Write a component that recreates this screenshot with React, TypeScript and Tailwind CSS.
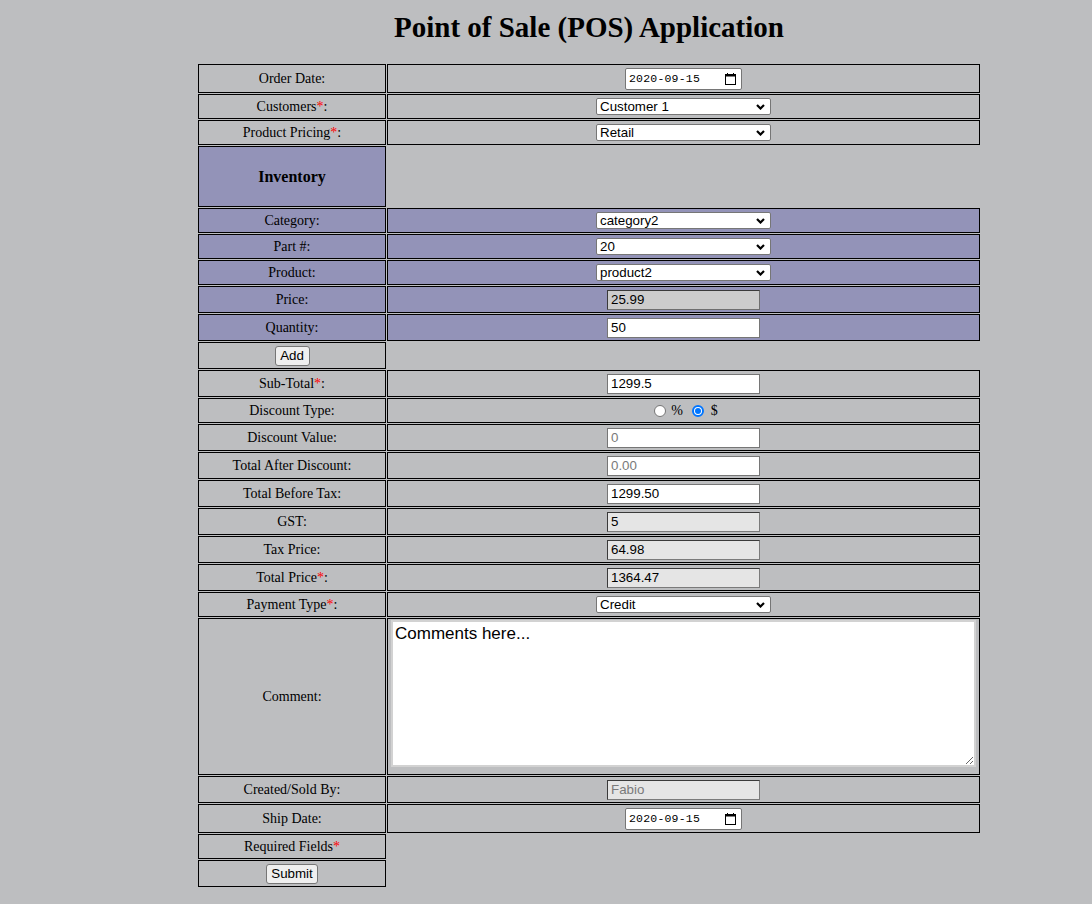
import React from 'react';

type Tone = 'white' | 'price' | 'readonly';

function Chevron() {
  return (
    <svg width="9" height="6" viewBox="0 0 9 6" fill="none">
      <path d="M1 1 L4.5 4.5 L8 1" stroke="#000" strokeWidth="2.2" />
    </svg>
  );
}

function CalendarIcon() {
  return (
    <svg width="11" height="12" viewBox="0 0 11 12" fill="none">
      <rect x="0.5" y="1.5" width="10" height="10" stroke="#000" />
      <rect x="0.5" y="1.5" width="10" height="2" fill="#000" />
      <rect x="2" y="0" width="1" height="2" fill="#000" />
      <rect x="8" y="0" width="1" height="2" fill="#000" />
    </svg>
  );
}

function Select({ value }: { value: string }) {
  return (
    <div className="mx-auto flex h-[17px] w-[175px] items-center justify-between rounded-[2px] border border-[#767676] bg-white pl-[3px] pr-[5px] text-left font-['Liberation_Sans',Arial,sans-serif] text-[13.33px] leading-none text-black">
      <span>{value}</span>
      <Chevron />
    </div>
  );
}

function DateBox() {
  return (
    <div className="mx-auto flex h-[22px] w-[117px] items-center justify-between rounded-[2px] border border-[#767676] bg-white pl-[3px] pr-[5px]">
      <span className="font-['Liberation_Mono',monospace] text-[11.5px] leading-none tracking-[0.2px] text-black">2020-09-15</span>
      <CalendarIcon />
    </div>
  );
}

function TextBox({ value, tone = 'white', muted = false }: { value: string; tone?: Tone; muted?: boolean }) {
  const look =
    tone === 'white'
      ? 'bg-white border border-[#767676]'
      : tone === 'price'
        ? 'bg-[#cccccc] border border-t-[#3a3a3a] border-l-[#3a3a3a] border-r-[#6e6e6e] border-b-[#6e6e6e]'
        : 'bg-[#e5e5e5] border border-t-[#3a3a3a] border-l-[#3a3a3a] border-r-[#7a7a7a] border-b-[#7a7a7a]';
  return (
    <div
      className={`mx-auto flex h-[20px] w-[153px] items-center px-[3px] text-left font-['Liberation_Sans',Arial,sans-serif] text-[13.33px] leading-none ${look} ${muted ? 'text-[#7a7a7a]' : 'text-black'}`}
    >
      {value}
    </div>
  );
}

function Button({ label, w }: { label: string; w: string }) {
  return (
    <button
      type="button"
      className={`mx-auto flex h-[20px] ${w} items-center justify-center rounded-[3px] border border-[#767676] bg-[#efefef] font-['Liberation_Sans',Arial,sans-serif] text-[13.33px] leading-none text-black`}
    >
      {label}
    </button>
  );
}

function Radio({ checked }: { checked?: boolean }) {
  if (checked) {
    return (
      <span className="flex h-[12px] w-[12px] items-center justify-center rounded-full border-2 border-[#0075ff] bg-white">
        <span className="h-[6px] w-[6px] rounded-full bg-[#0075ff]" />
      </span>
    );
  }
  return <span className="h-[12px] w-[12px] rounded-full border border-[#767676] bg-white" />;
}

function Star() {
  return <span className="text-[#ff0000]">*</span>;
}

type RowProps = {
  label: string;
  required?: boolean;
  purple?: boolean;
  h: string;
  children: React.ReactNode;
};

function Row({ label, required = false, purple = false, h, children }: RowProps) {
  const bg = purple ? 'bg-[#9393b8]' : '';
  return (
    <tr>
      <td className={`w-[189px] border border-black p-px text-center align-middle ${bg} ${h}`}>
        {label}
        {required && <Star />}:
      </td>
      <td className={`w-[593px] border border-black p-px text-center align-middle ${bg} ${h}`}>{children}</td>
    </tr>
  );
}

export default function App() {
  return (
    <div className="min-h-screen bg-[#bdbec0] font-['Liberation_Serif','Times_New_Roman',serif] text-[14px] text-black">
      <div className="ml-[197px] w-[784px] pt-[11px]">
        <h1 className="whitespace-nowrap text-center text-[29px] font-bold leading-[32px]">
          Point of Sale (POS) Application
        </h1>
        <table className="mt-[20px] table-fixed border-separate border-spacing-[1px]">
          <tbody>
            <Row label="Order Date" h="h-[29px]">
              <DateBox />
            </Row>
            <Row label="Customers" required h="h-[25px]">
              <Select value="Customer 1" />
            </Row>
            <Row label="Product Pricing" required h="h-[25px]">
              <Select value="Retail" />
            </Row>
            <tr>
              <td className="h-[61px] w-[189px] border border-black bg-[#9393b8] p-px text-center align-middle text-[16px] font-bold">
                Inventory
              </td>
            </tr>
            <Row label="Category" purple h="h-[25px]">
              <Select value="category2" />
            </Row>
            <Row label="Part #" purple h="h-[25px]">
              <Select value="20" />
            </Row>
            <Row label="Product" purple h="h-[25px]">
              <Select value="product2" />
            </Row>
            <Row label="Price" purple h="h-[27px]">
              <TextBox value="25.99" tone="price" />
            </Row>
            <Row label="Quantity" purple h="h-[27px]">
              <TextBox value="50" />
            </Row>
            <tr>
              <td className="h-[27px] w-[189px] border border-black p-px text-center align-middle">
                <Button label="Add" w="w-[35px]" />
              </td>
            </tr>
            <Row label="Sub-Total" required h="h-[27px]">
              <TextBox value="1299.5" />
            </Row>
            <Row label="Discount Type" h="h-[25px]">
              <div className="flex items-center justify-center pl-[5px]">
                <Radio />
                <span className="ml-[5px]">%</span>
                <span className="ml-[9px]">
                  <Radio checked />
                </span>
                <span className="ml-[7px]">$</span>
              </div>
            </Row>
            <Row label="Discount Value" h="h-[27px]">
              <TextBox value="0" muted />
            </Row>
            <Row label="Total After Discount" h="h-[27px]">
              <TextBox value="0.00" muted />
            </Row>
            <Row label="Total Before Tax" h="h-[27px]">
              <TextBox value="1299.50" />
            </Row>
            <Row label="GST" h="h-[27px]">
              <TextBox value="5" tone="readonly" />
            </Row>
            <Row label="Tax Price" h="h-[27px]">
              <TextBox value="64.98" tone="readonly" />
            </Row>
            <Row label="Total Price" required h="h-[27px]">
              <TextBox value="1364.47" tone="readonly" />
            </Row>
            <Row label="Payment Type" required h="h-[25px]">
              <Select value="Credit" />
            </Row>
            <tr>
              <td className="h-[157px] w-[189px] border border-black p-px text-center align-middle">Comment:</td>
              <td className="h-[157px] w-[593px] border border-black px-[3px] py-px align-top">
                <textarea
                  defaultValue="Comments here..."
                  className="block h-[147px] w-[585px] border-2 border-[#d2d2d2] bg-white px-[2px] pt-[2px] font-['Liberation_Sans',Arial,sans-serif] text-[17px] leading-[19px] text-black outline-none"
                />
              </td>
            </tr>
            <Row label="Created/Sold By" h="h-[27px]">
              <TextBox value="Fabio" tone="readonly" muted />
            </Row>
            <Row label="Ship Date" h="h-[29px]">
              <DateBox />
            </Row>
            <tr>
              <td className="h-[25px] w-[189px] border border-black p-px text-center align-middle">
                Required Fields
                <Star />
              </td>
            </tr>
            <tr>
              <td className="h-[27px] w-[189px] border border-black p-px text-center align-middle">
                <Button label="Submit" w="w-[52px]" />
              </td>
            </tr>
          </tbody>
        </table>
      </div>
    </div>
  );
}
